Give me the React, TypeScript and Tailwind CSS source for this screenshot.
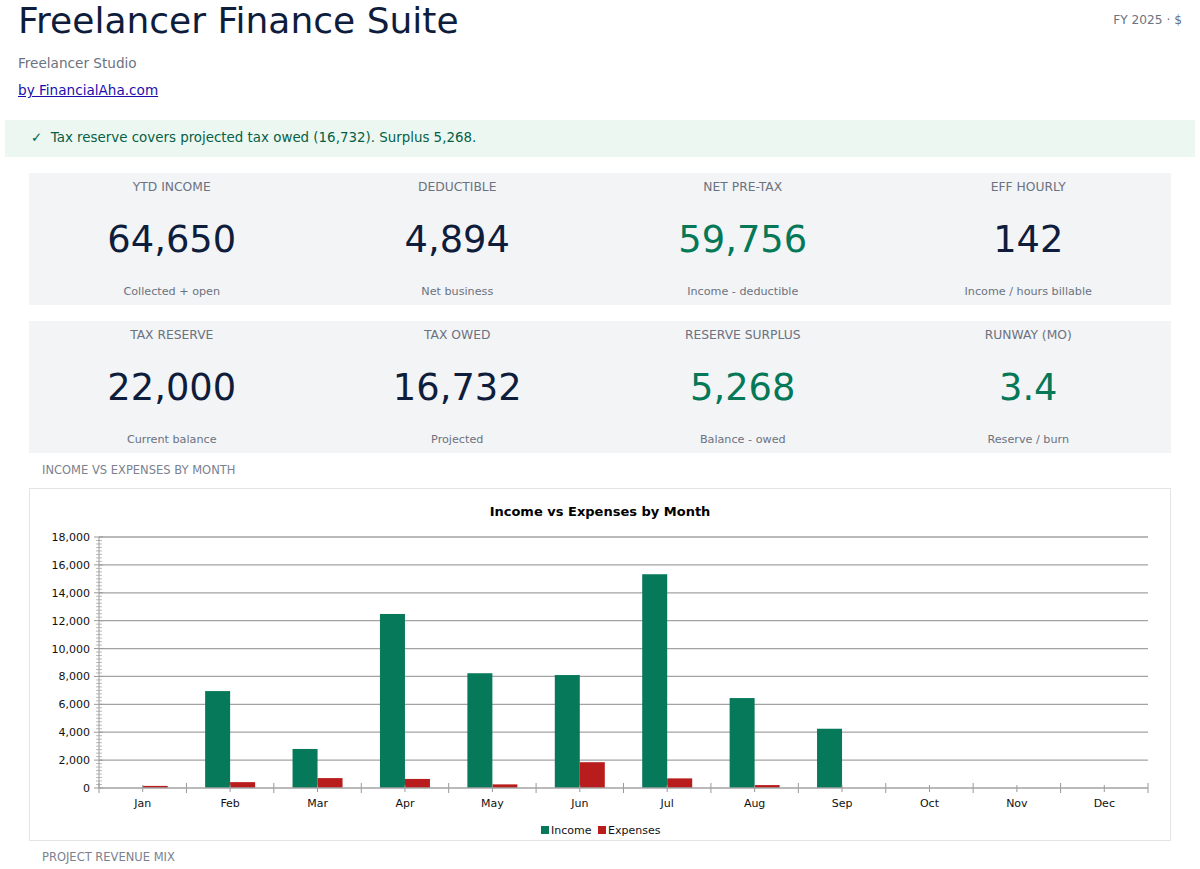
import React from 'react';

const kpiRows = [
  [
    { label: 'YTD INCOME', value: '64,650', sub: 'Collected + open', green: false },
    { label: 'DEDUCTIBLE', value: '4,894', sub: 'Net business', green: false },
    { label: 'NET PRE-TAX', value: '59,756', sub: 'Income - deductible', green: true },
    { label: 'EFF HOURLY', value: '142', sub: 'Income / hours billable', green: false },
  ],
  [
    { label: 'TAX RESERVE', value: '22,000', sub: 'Current balance', green: false },
    { label: 'TAX OWED', value: '16,732', sub: 'Projected', green: false },
    { label: 'RESERVE SURPLUS', value: '5,268', sub: 'Balance - owed', green: true },
    { label: 'RUNWAY (MO)', value: '3.4', sub: 'Reserve / burn', green: true },
  ],
];

const months = [
  { m: 'Jan', inc: 0, exp: 150 },
  { m: 'Feb', inc: 6950, exp: 420 },
  { m: 'Mar', inc: 2800, exp: 710 },
  { m: 'Apr', inc: 12480, exp: 650 },
  { m: 'May', inc: 8230, exp: 260 },
  { m: 'Jun', inc: 8100, exp: 1850 },
  { m: 'Jul', inc: 15330, exp: 690 },
  { m: 'Aug', inc: 6450, exp: 210 },
  { m: 'Sep', inc: 4250, exp: 0 },
  { m: 'Oct', inc: 0, exp: 0 },
  { m: 'Nov', inc: 0, exp: 0 },
  { m: 'Dec', inc: 0, exp: 0 },
];

const X0 = 69;
const X1 = 1118;
const YT = 48;
const YB = 299;
const yOf = (v: number) => YB - (v / 18000) * (YB - YT);
const catW = (X1 - X0) / 12;

const Chart = () => {
  const majors = [0, 2000, 4000, 6000, 8000, 10000, 12000, 14000, 16000, 18000];
  const minors: number[] = [];
  for (let v = 0; v <= 18000; v += 250) if (v % 2000 !== 0) minors.push(v);

  return (
    <svg width="1140" height="351" viewBox="0 0 1140 351" className="block">
      <text x="570" y="27" textAnchor="middle" fontSize="13" fontWeight="700" fill="#000">
        Income vs Expenses by Month
      </text>

      {majors.map((v) => (
        <g key={v}>
          {v > 0 && <line x1={X0} x2={X1} y1={yOf(v)} y2={yOf(v)} stroke="#a3a3a3" strokeWidth="1.3" />}
          <line x1={X0 - 5} x2={X0 + 4} y1={yOf(v)} y2={yOf(v)} stroke="#999" strokeWidth="1" />
          <text x="60" y={yOf(v) + 4} textAnchor="end" fontSize="11" fill="#111">
            {v.toLocaleString('en-US')}
          </text>
        </g>
      ))}
      {minors.map((v) => (
        <line key={v} x1={X0 - 3} x2={X0 + 3} y1={yOf(v)} y2={yOf(v)} stroke="#aaa" strokeWidth="0.8" />
      ))}
      <line x1={X0} x2={X0} y1={YT} y2={YB} stroke="#999" strokeWidth="1" />

      {months.map((d, i) => {
        const cx = X0 + catW * (i + 0.5);
        return (
          <g key={d.m}>
            {d.inc > 0 && <rect x={cx - 25} y={yOf(d.inc)} width="25" height={YB - yOf(d.inc)} fill="#06795a" />}
            {d.exp > 0 && <rect x={cx} y={yOf(d.exp)} width="25" height={YB - yOf(d.exp)} fill="#b91c1c" />}
            <line x1={cx} x2={cx} y1={YB - 3} y2={YB + 4} stroke="#999" strokeWidth="1" />
            <text x={cx} y="318" textAnchor="middle" fontSize="11" fill="#111">
              {d.m}
            </text>
          </g>
        );
      })}
      {Array.from({ length: 13 }).map((_, i) => (
        <line
          key={i}
          x1={X0 + catW * i}
          x2={X0 + catW * i}
          y1={YB - 5}
          y2={YB + 5}
          stroke="#999"
          strokeWidth="1"
        />
      ))}
      <line x1={X0} x2={X1} y1={YB} y2={YB} stroke="#a3a3a3" strokeWidth="1.3" />

      <rect x="511" y="337" width="8" height="8" fill="#06795a" />
      <text x="521" y="345" fontSize="11" fill="#111">
        Income
      </text>
      <rect x="568" y="337" width="8" height="8" fill="#b91c1c" />
      <text x="578" y="345" fontSize="11" fill="#111">
        Expenses
      </text>
    </svg>
  );
};

const App = () => {
  return (
    <div className="bg-white min-h-[869px]" style={{ fontFamily: '"DejaVu Sans", Verdana, sans-serif' }}>
      <div className="flex justify-between px-[18px]">
        <div>
          <h1 className="text-[36px] leading-[42px] text-[#0f1d3c]">Freelancer Finance Suite</h1>
          <p className="mt-[11px] text-[13.6px] leading-[20px] text-[#6b7280]">Freelancer Studio</p>
          <a href="#" className="mt-[7px] block text-[13.6px] leading-[20px] text-[#1a0dab] underline">
            by FinancialAha.com
          </a>
        </div>
        <div className="pt-[10px] text-[12.2px] leading-[20px] text-[#6b7280]">FY 2025 · $</div>
      </div>

      <div className="mx-[5px] mt-[20px] flex h-[37px] items-center bg-[#edf7f1] pl-[26px] text-[13.4px] text-[#065f46]">
        ✓&nbsp; Tax reserve covers projected tax owed (16,732). Surplus 5,268.
      </div>

      <div className="mx-[29px] mt-4 flex flex-col gap-4">
        {kpiRows.map((row, r) => (
          <div key={r} className="grid h-[132px] grid-cols-4 bg-[#f3f4f6]">
            {row.map((k) => (
              <div key={k.label} className="flex flex-col items-center pt-[6px]">
                <div className="text-[12.3px] leading-[16px] text-[#6b7280]">{k.label}</div>
                <div
                  className={`mt-[23px] text-[36.8px] leading-[44px] ${
                    k.green ? 'text-[#047857]' : 'text-[#0f1d3c]'
                  }`}
                >
                  {k.value}
                </div>
                <div className="mt-[22px] text-[11.2px] leading-[16px] text-[#6b7280]">{k.sub}</div>
              </div>
            ))}
          </div>
        ))}
      </div>

      <div className="ml-[42px] mt-[9px] text-[11.5px] leading-[16px] text-[#7b8190]">INCOME VS EXPENSES BY MONTH</div>

      <div className="mx-[29px] mt-[10px] h-[353px] border border-[#e2e4e8] bg-white">
        <Chart />
      </div>

      <div className="ml-[42px] mt-[8px] text-[11.5px] leading-[16px] text-[#7b8190]">PROJECT REVENUE MIX</div>
    </div>
  );
};

export default App;
